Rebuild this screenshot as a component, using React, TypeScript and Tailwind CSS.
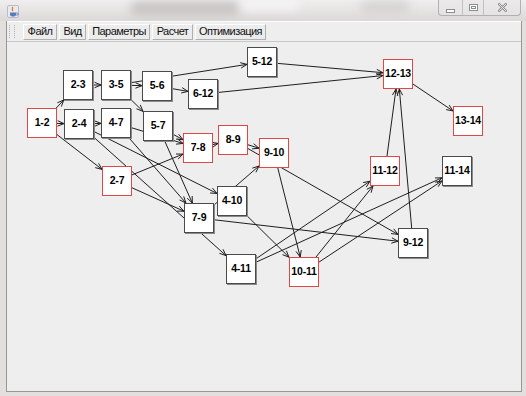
import React from "react";

type N = { id: string; x: number; y: number; red?: boolean };

const OX = 7;
const OY = 42;
const S = 30;

const nodes: N[] = [
  { id: "1-2", x: 27, y: 108, red: true },
  { id: "2-3", x: 63, y: 70 },
  { id: "3-5", x: 101, y: 70 },
  { id: "5-6", x: 142, y: 71 },
  { id: "6-12", x: 188, y: 79 },
  { id: "5-12", x: 247, y: 47 },
  { id: "2-4", x: 64, y: 109 },
  { id: "4-7", x: 101, y: 108 },
  { id: "5-7", x: 143, y: 111 },
  { id: "7-8", x: 183, y: 133, red: true },
  { id: "8-9", x: 218, y: 125, red: true },
  { id: "2-7", x: 102, y: 166, red: true },
  { id: "4-10", x: 217, y: 186 },
  { id: "9-10", x: 259, y: 138, red: true },
  { id: "12-13", x: 383, y: 59, red: true },
  { id: "13-14", x: 453, y: 106, red: true },
  { id: "11-12", x: 370, y: 156, red: true },
  { id: "11-14", x: 442, y: 156 },
  { id: "7-9", x: 184, y: 203 },
  { id: "4-11", x: 226, y: 254 },
  { id: "10-11", x: 289, y: 257, red: true },
  { id: "9-12", x: 398, y: 228 },
];

const edges: [string, string][] = [
  ["1-2", "2-3"], ["1-2", "2-4"], ["1-2", "2-7"],
  ["2-3", "3-5"],
  ["2-4", "4-7"], ["2-4", "4-10"], ["2-4", "4-11"],
  ["2-7", "7-8"], ["2-7", "7-9"],
  ["3-5", "5-6"], ["3-5", "5-7"], ["3-5", "5-12"],
  ["4-7", "7-8"], ["4-7", "7-9"],
  ["5-6", "6-12"],
  ["5-7", "7-8"], ["5-7", "7-9"],
  ["6-12", "12-13"], ["5-12", "12-13"],
  ["7-8", "8-9"],
  ["7-9", "9-10"], ["7-9", "9-12"],
  ["8-9", "9-10"], ["8-9", "9-12"],
  ["4-10", "10-11"],
  ["4-11", "11-12"], ["4-11", "11-14"],
  ["9-10", "10-11"],
  ["9-12", "12-13"],
  ["10-11", "11-12"], ["10-11", "11-14"],
  ["11-12", "12-13"],
  ["12-13", "13-14"],
];

const byId: Record<string, N> = Object.fromEntries(nodes.map((n) => [n.id, n]));

function center(n: N) {
  return { x: n.x - OX + S / 2, y: n.y - OY + S / 2 };
}

function Edge({ a, b }: { a: N; b: N }) {
  const p = center(a);
  const c = center(b);
  const dx = c.x - p.x;
  const dy = c.y - p.y;
  const h = S / 2;
  const s = Math.min(dx === 0 ? Infinity : h / Math.abs(dx), dy === 0 ? Infinity : h / Math.abs(dy));
  const tx = c.x - dx * s;
  const ty = c.y - dy * s;
  const len = Math.hypot(dx, dy);
  const ux = dx / len;
  const uy = dy / len;
  const L = 7;
  const ang = 0.4;
  const cos = Math.cos(ang);
  const sin = Math.sin(ang);
  const l1x = tx - L * (ux * cos - uy * sin);
  const l1y = ty - L * (uy * cos + ux * sin);
  const l2x = tx - L * (ux * cos + uy * sin);
  const l2y = ty - L * (uy * cos - ux * sin);
  return (
    <g>
      <line x1={p.x} y1={p.y} x2={tx} y2={ty} />
      <polyline points={`${l1x},${l1y} ${tx},${ty} ${l2x},${l2y}`} fill="none" />
    </g>
  );
}

function JavaIcon() {
  return (
    <svg width="12" height="13" viewBox="0 0 12 13">
      <rect x="0.5" y="0.5" width="11" height="12" rx="1.5" fill="#e8eaf0" stroke="#b8bcc8" />
      <path d="M5 2 C7 3.5 4 4.5 6 6" stroke="#e07a20" strokeWidth="1.3" fill="none" />
      <path d="M3 7.5 h6 v2 a2 2 0 0 1 -2 2 h-2 a2 2 0 0 1 -2 -2 z" fill="#5a7ab8" />
      <path d="M9 8 h1.2 a1 1 0 0 1 0 2 h-1.2" stroke="#5a7ab8" strokeWidth="0.8" fill="none" />
    </svg>
  );
}

const menu = [
  { t: "Файл", w: 34 },
  { t: "Вид", w: 27 },
  { t: "Параметры", w: 62 },
  { t: "Расчет", w: 41 },
  { t: "Оптимизация", w: 71 },
];

export default function App() {
  return (
    <div
      className="relative flex h-[396px] w-[526px] flex-col overflow-hidden bg-[#e3dfde]"
      style={{ fontFamily: '"Liberation Sans", Arial, sans-serif' }}
    >
      {/* title bar */}
      <div className="relative h-[21px] shrink-0 bg-gradient-to-b from-[#f0eeee] to-[#dcd8d8]">
        <div className="absolute left-[130px] top-[1px] h-[14px] w-[110px] rounded-full bg-[#a8a4a4] opacity-50 blur-[5px]" />
        <div className="absolute left-[240px] top-[0px] h-[10px] w-[60px] rounded-full bg-[#f8f8f8] opacity-80 blur-[4px]" />
        <div className="absolute left-[360px] top-[0px] h-[12px] w-[50px] rounded-full bg-[#b8b4b4] opacity-40 blur-[5px]" />
        <div className="absolute left-[7px] top-[5px]">
          <JavaIcon />
        </div>
        <div className="absolute right-[5px] top-0 flex h-[16px] overflow-hidden rounded-b-[4px] border border-t-0 border-[#b4b0b0] bg-[#e8e6e6]/60">
          <div className="flex w-[24px] items-center justify-center border-r border-[#c4c0c0]">
            <div className="mt-[6px] h-[4px] w-[9px] border border-[#8c8c8c] bg-white" />
          </div>
          <div className="flex w-[21px] items-center justify-center border-r border-[#c4c0c0]">
            <div className="flex h-[7px] w-[9px] items-center justify-center border border-[#8c8c8c] bg-white">
              <div className="h-[3px] w-[5px] border border-[#8c8c8c]" />
            </div>
          </div>
          <div className="flex w-[36px] items-center justify-center">
            <svg width="9" height="9" viewBox="0 0 9 9">
              <path d="M1 1 L8 8 M8 1 L1 8" stroke="#8a8a8a" strokeWidth="2.4" strokeLinecap="square" />
              <path d="M1 1 L8 8 M8 1 L1 8" stroke="#f4f4f4" strokeWidth="0.9" strokeLinecap="square" />
            </svg>
          </div>
        </div>
      </div>

      {/* client */}
      <div className="mb-[4px] ml-[6px] mr-[4px] flex flex-1 flex-col border-x border-b border-[#9a9696] bg-[#eeeeee]">
        {/* menu bar */}
        <div className="flex h-[21px] shrink-0 items-center gap-[2px] border-b border-t border-b-[#c8c8c8] border-t-white pl-[2px]">
          <div className="mr-[3px] grid h-[15px] w-[9px] grid-cols-2 content-start gap-[1px] pt-[1px]">
            {Array.from({ length: 14 }).map((_, i) => (
              <div key={i} className="h-[1px] w-[1px] bg-[#a8b0c0]" />
            ))}
          </div>
          {menu.map((m) => (
            <div
              key={m.t}
              className="flex h-[16px] items-center justify-center border border-b-[#b0b0b0] border-l-white border-r-[#b0b0b0] border-t-white bg-[#ececec] text-[11px] tracking-[-0.55px] text-[#111]"
              style={{ width: m.w }}
            >
              {m.t}
            </div>
          ))}
        </div>

        {/* canvas */}
        <div className="relative flex-1">
          <svg className="absolute inset-0 h-full w-full" stroke="#1e1e1e" strokeWidth="1">
            {edges.map(([a, b]) => (
              <Edge key={a + ">" + b} a={byId[a]} b={byId[b]} />
            ))}
          </svg>
          {nodes.map((n) => (
            <div
              key={n.id}
              className={
                n.red
                  ? "absolute flex h-[30px] w-[30px] items-center justify-center border border-[#e04848] bg-white text-[10.5px] font-bold text-black"
                  : "absolute flex h-[30px] w-[30px] items-center justify-center border border-[#4a4a4a] bg-white text-[10.5px] font-bold text-black shadow-[1px_1px_0_#8a8a8a]"
              }
              style={{ left: n.x - OX, top: n.y - OY }}
            >
              <span className="tracking-[-0.2px]">{n.id}</span>
            </div>
          ))}
        </div>
      </div>
    </div>
  );
}
